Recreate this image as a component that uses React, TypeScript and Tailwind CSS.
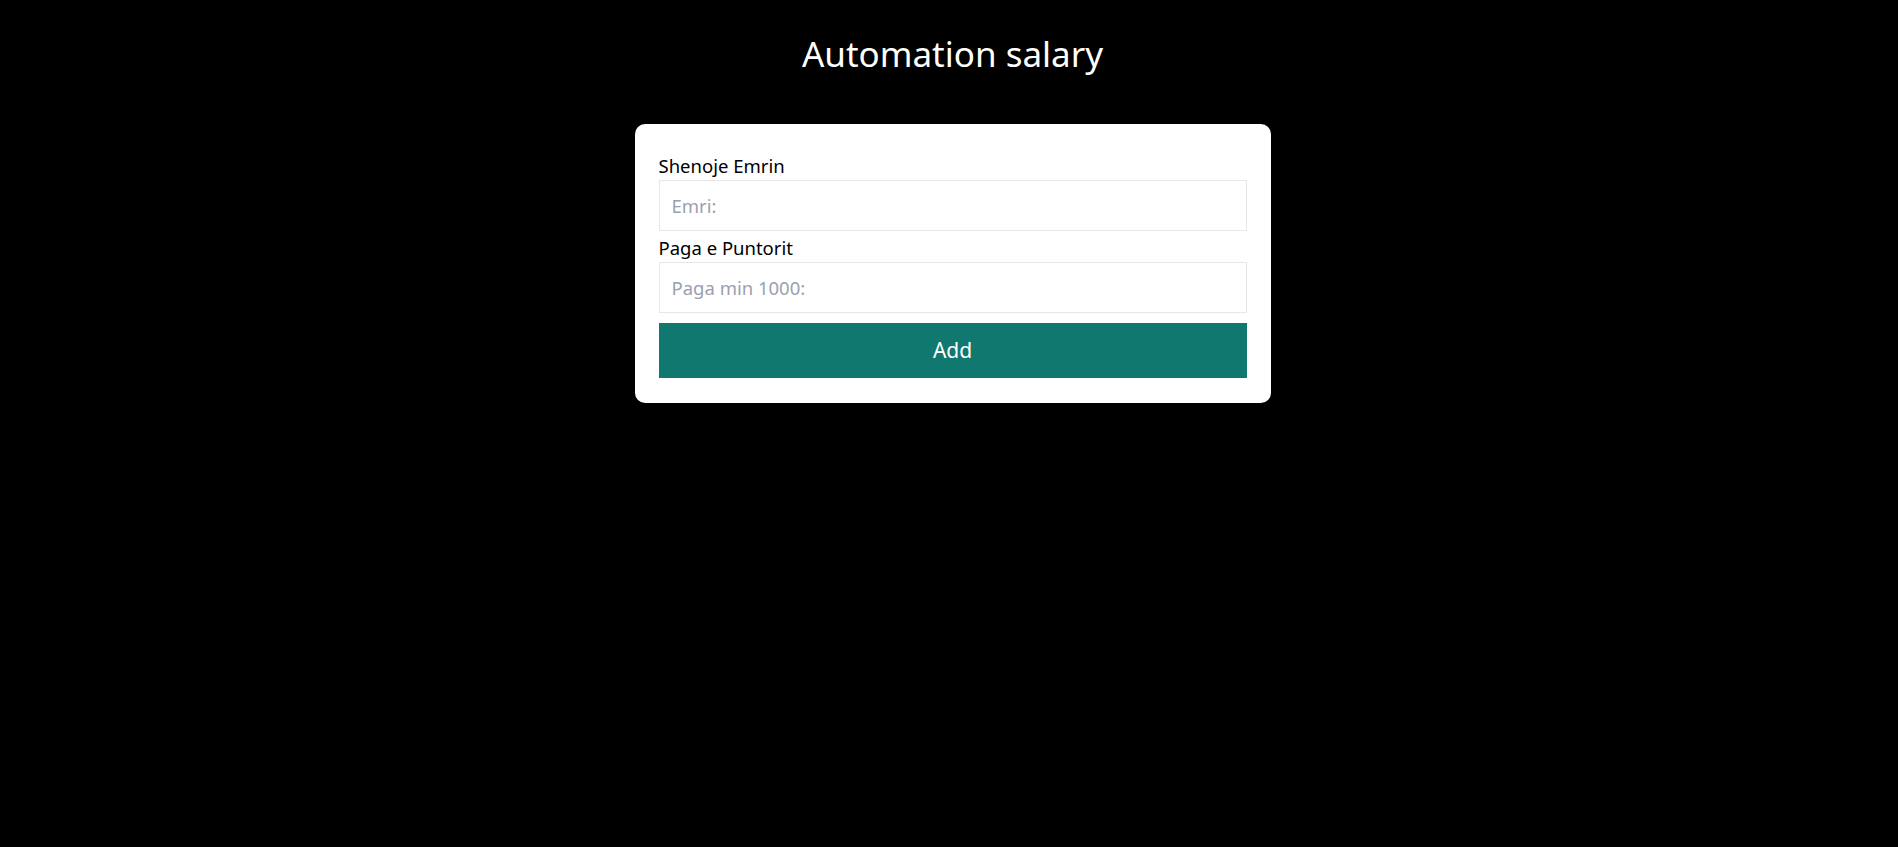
import React, { useState } from "react";

export default function App() {
  const [name, setName] = useState("");
  const [salary, setSalary] = useState("");

  const handleSubmit = (e: React.FormEvent) => {
    e.preventDefault();
    if (!name.trim() || Number(salary) < 1000) return;
    setName("");
    setSalary("");
  };

  return (
    <div className="min-h-screen bg-black flex flex-col items-center pl-[7px] font-['Noto_Sans',sans-serif]">
      <h1 className="mt-[34px] text-[35px] leading-[40px] text-white">Automation salary</h1>
      <form
        onSubmit={handleSubmit}
        className="mt-[50px] w-[636px] bg-white rounded-[10px] px-6 pt-[28px] pb-[25px] flex flex-col"
      >
        <label className="text-[18.5px] leading-[28px] text-black">Shenoje Emrin</label>
        <input
          type="text"
          value={name}
          onChange={(e) => setName(e.target.value)}
          placeholder="Emri:"
          className="h-[51px] px-3 border border-gray-200 text-[18.5px] text-black placeholder:text-gray-400 outline-none"
        />
        <label className="mt-[3px] text-[18.5px] leading-[28px] text-black">Paga e Puntorit</label>
        <input
          type="number"
          value={salary}
          onChange={(e) => setSalary(e.target.value)}
          placeholder="Paga min 1000:"
          className="h-[51px] px-3 border border-gray-200 text-[18.5px] text-black placeholder:text-gray-400 outline-none"
        />
        <button
          type="submit"
          className="mt-[10px] h-[55px] bg-[#10786f] text-white text-[21px]"
        >
          Add
        </button>
      </form>
    </div>
  );
}
